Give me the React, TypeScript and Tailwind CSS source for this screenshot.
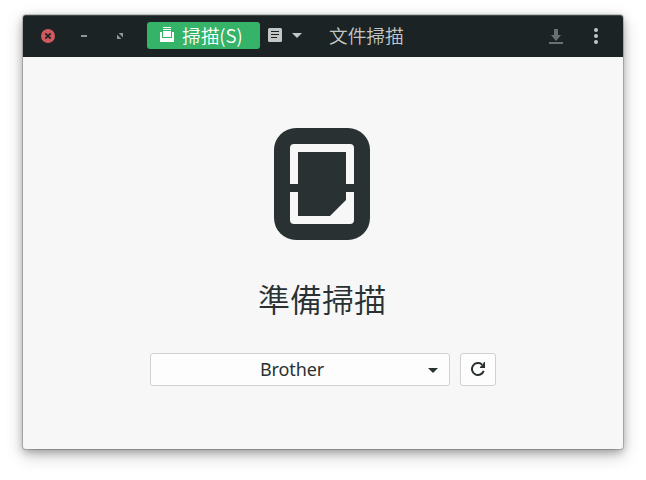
import type { ReactNode } from 'react';

const latin = "font-['Noto_Sans','Noto_Sans_CJK_TC',sans-serif]";

function Caret({ className }: { className: string }) {
  return (
    <svg width="10" height="5" viewBox="0 0 10 5" className={className} fill="currentColor">
      <path d="M0 0h10L5 5z" />
    </svg>
  );
}

function HeaderBar({ children }: { children: ReactNode }) {
  return (
    <header className="flex h-[42px] items-center rounded-t-[3px] border-t border-[#3f4647] bg-[#1c2325] pb-px text-[#c3c8c7]">
      {children}
    </header>
  );
}

function WindowControls() {
  return (
    <div className="ml-[18px] flex items-center">
      <svg width="14" height="14" viewBox="0 0 14 14">
        <circle cx="7" cy="7" r="7" fill="#d05a5f" />
        <path d="M4.300 4.300l5.400 5.400M9.700 4.300L4.300 9.700" stroke="#1c2325" strokeWidth="1.700" />
      </svg>
      <svg width="6" height="2" className="ml-[26px]">
        <rect width="6" height="2" fill="#8f9696" />
      </svg>
      <svg width="6" height="6" viewBox="0 0 6 6" className="ml-[30px]" fill="#8f9696">
        <path d="M1.600 0H6v4.400zM0 1.600L4.400 6H0z" />
      </svg>
    </div>
  );
}

function ScanButton() {
  return (
    <button className="mb-px ml-6 flex h-[27px] w-[113px] items-center rounded-[3px] bg-[#35b368] pl-[13px] text-white">
      <svg width="14" height="15" viewBox="0 0 14 15" className="mb-0.5" fill="currentColor">
        <path d="M3 0h8v1H3zM3 2h8v1H3zM3 4h8v6H3z" />
        <path d="M0 5h2v6h10V5h2v9.500q0 .5-.5.5H.5q-.5 0-.5-.5z" />
      </svg>
      <span className="mb-px ml-2 whitespace-nowrap font-['Noto_Sans_CJK_TC',sans-serif] text-[18.67px] leading-none font-[350]">
        掃描(S)
      </span>
    </button>
  );
}

function ScannerLogo() {
  return (
    <svg width="96" height="112" viewBox="0 0 96 112">
      <rect width="96" height="112" rx="22" fill="#293133" />
      <path
        fill="#f7f7f7"
        d="M16 56V20q0-4 4-4h56q4 0 4 4v36h-8V24H24v32zM16 64h8v24h32l16-16v-8h8v28q0 4-4 4H20q-4 0-4-4z"
      />
    </svg>
  );
}

export default function App() {
  return (
    <div className={`h-[480px] w-[646px] overflow-hidden bg-white px-[23px] pt-[15px] text-[#293133] ${latin}`}>
      <div className="flex h-[434px] w-[600px] flex-col rounded-[3px] bg-[#f7f7f7] shadow-[0_0_0_1px_rgba(0,0,0,0.18),0_3px_8px_rgba(0,0,0,0.28),0_6px_18px_rgba(0,0,0,0.22)]">
        <HeaderBar>
          <WindowControls />
          <ScanButton />
          <svg width="14" height="14" viewBox="0 0 14 14" className="mb-0.5 ml-2">
            <rect width="14" height="14" rx="1.5" fill="#c3c8c7" />
            <path d="M3 3.500h8M3 6.500h8M3 9.500h6" stroke="#1c2325" strokeWidth="1" />
          </svg>
          <Caret className="mb-px ml-[10px]" />
          <h1 className="mb-0.5 ml-[27px] font-['Noto_Sans_CJK_TC',sans-serif] text-[18.67px] leading-none font-[350]">
            文件掃描
          </h1>
          <svg width="14" height="15" viewBox="0 0 14 15" className="mt-px ml-auto" fill="#697071">
            <path d="M5 0h4v6h3l-5 6-5-6h3zM0 13h14v2H0z" />
          </svg>
          <svg width="4" height="16" viewBox="0 0 4 16" className="mr-[25px] ml-[31px]" fill="currentColor">
            <circle cx="2" cy="2" r="2" />
            <circle cx="2" cy="8" r="2" />
            <circle cx="2" cy="14" r="2" />
          </svg>
        </HeaderBar>
        <main className="flex flex-1 flex-col items-center pt-[71px]">
          <div className="mr-0.5">
            <ScannerLogo />
          </div>
          <h2 className="mt-10 mr-0.5 font-['Noto_Sans_CJK_TC',sans-serif] text-[32px] leading-9 font-[350]">
            準備掃描
          </h2>
          <div className="mt-[37px] flex gap-[10px]">
            <div className="flex h-[33px] w-[300px] items-center rounded-[3px] border border-[#cfd2d2] bg-[#fdfdfd] pr-[11px]">
              <span className="mb-0.5 flex-1 pl-[5px] text-center text-[18px] leading-none tracking-[-0.1px]">Brother</span>
              <Caret className="mt-px" />
            </div>
            <button className="flex h-[33px] w-9 items-center justify-center rounded-[3px] border border-[#cfd2d2] bg-[#fdfdfd] pb-px">
              <svg width="14" height="14" viewBox="0 0 14 14">
                <path d="M11.200 2.700A6 6 0 1 0 12.700 8.900" fill="none" stroke="currentColor" strokeWidth="2" />
                <path d="M14 0v6H9V5l3-3 1-2z" fill="currentColor" />
              </svg>
            </button>
          </div>
        </main>
      </div>
    </div>
  );
}
